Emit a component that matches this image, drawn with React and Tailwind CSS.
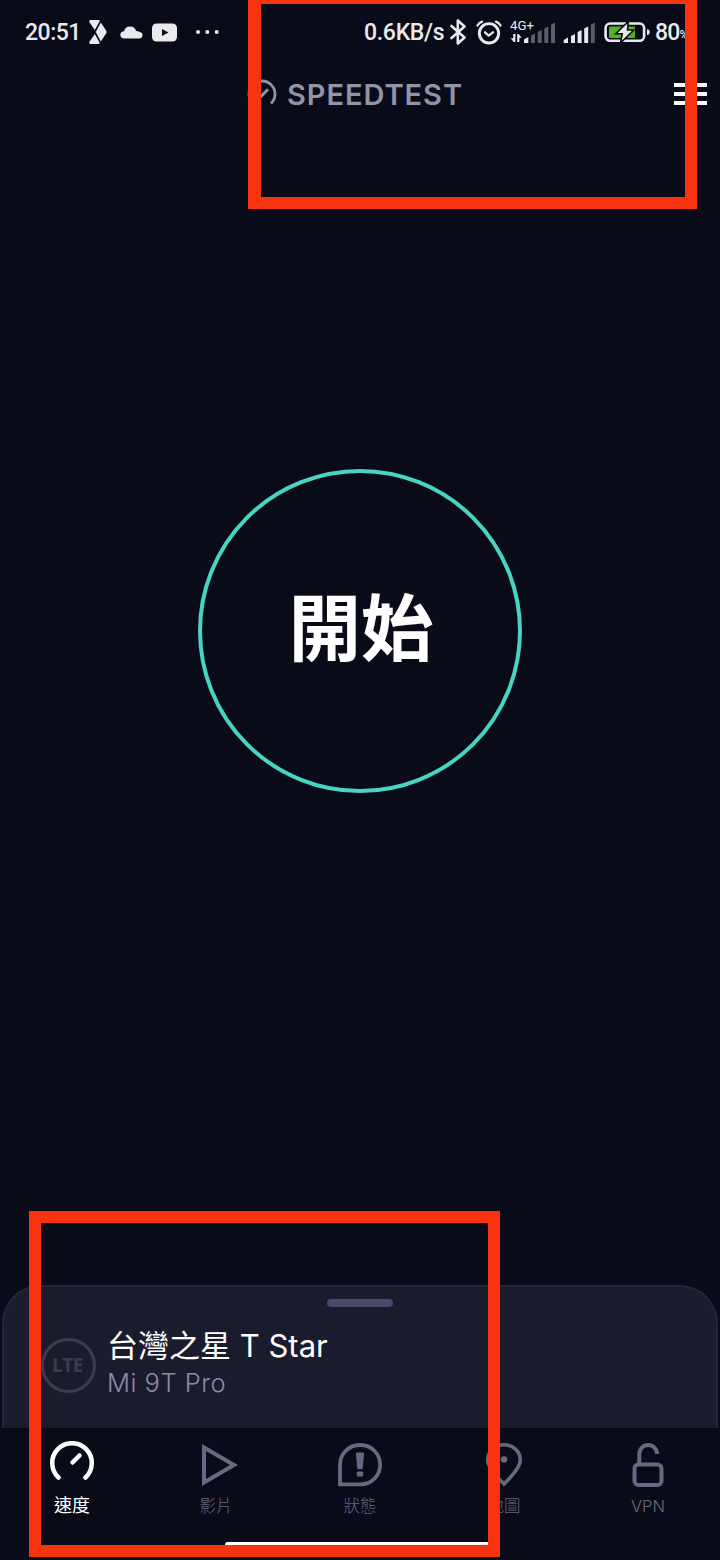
const TEXT = "font-['Inter','Noto_Sans_CJK_TC',sans-serif]";

function StatusBar() {
  return (
    <div className="flex h-16 w-full items-center whitespace-nowrap pl-[25px] font-['Roboto',sans-serif] text-[23px] font-medium text-[#e9e9ee]">
      <span className="mt-[3px] w-[64px] tracking-[-0.5px]">20:51</span>
      <svg className="h-6 w-[18px] shrink-0" viewBox="0 0 18 24" fill="currentColor">
        <path d="M2 0H9.5Q11.3 0.2 10.4 1.8L5.8 10L0.6 2.6Q-0.6 0 2 0Z" />
        <path d="M11.8 2.6L17.3 10.7Q18 12 17.3 13.3L11.8 21.4L6.8 12Z" />
        <path d="M5.8 14L10.4 22.2Q11.3 23.8 9.5 24H2Q-0.6 24 0.6 21.4Z" />
      </svg>
      <svg className="ml-[13px] h-[13px] w-[23px] shrink-0" viewBox="0 0 23 13" fill="currentColor">
        <path d="M4 12.5Q0.2 12 0.3 8.6Q0.6 5.6 4 5.2Q5.2 0.6 10 0.4Q15 0.6 16.2 5Q17.8 4.6 19 5.8Q22.7 6.4 22.6 9.6Q22.3 12.2 19.4 12.5Z" />
      </svg>
      <svg className="ml-[9px] h-[19px] w-[25px] shrink-0" viewBox="0 0 25 19">
        <rect y="0.5" width="25" height="18" rx="4.5" fill="currentColor" />
        <path d="M10 6L16.5 9.5L10 13Z" fill="#090b18" />
      </svg>
      <svg className="ml-[18px] h-1 w-[25px] shrink-0" viewBox="0 0 25 4" fill="currentColor">
        <circle cx="3" cy="2" r="2" />
        <circle cx="12.3" cy="2" r="2" />
        <circle cx="21.7" cy="2" r="2" />
      </svg>
      <span className="ml-[144px] mt-[3px] w-[86px] tracking-[-0.3px]">0.6KB/s</span>
      <svg className="h-[26px] w-4 shrink-0" viewBox="0 0 16 26" fill="none" stroke="currentColor" strokeWidth="2.6" strokeLinejoin="round" strokeLinecap="round">
        <path d="M1.5 7L14.5 18.5L7.8 24.5V1.5L14.5 7.5L1.5 19" />
      </svg>
      <svg className="ml-[10px] h-[25px] w-[26px] shrink-0" viewBox="0 0 26 25" fill="none" stroke="currentColor" strokeLinecap="round" strokeLinejoin="round">
        <circle cx="13" cy="13.3" r="9.7" strokeWidth="2.9" />
        <path d="M1.5 5.5Q3 2.8 6 1.6M24.5 5.5Q23 2.8 20 1.6" strokeWidth="2.3" />
        <path d="M9 12.3L12.7 15.6L17 12.3" strokeWidth="2.3" />
      </svg>
      <svg className="ml-2 h-8 w-[46px] shrink-0 font-normal" viewBox="0 -4 46 32" fill="currentColor">
        <text x="0" y="10" fontSize="13.2">4G+</text>
        <path d="M3.2 14H5.4V22H3.8L0.5 18.3H3.2ZM7.2 22V14H8.6L11.6 17.7H9.4V22Z" />
        <path d="M14 19.5L18.3 17V22.5Q18.3 23 17.8 23H14.5Q14 23 14 22.5Z" />
        <g fill="#5c5c68">
          <path d="M21 15.5L25 13.5V23H21Z" />
          <path d="M27.7 12L31.7 10V23H27.7Z" />
          <path d="M34.3 8.5L38.3 6.5V23H34.3Z" />
          <path d="M41 4.5L45 2.5V23H41Z" />
        </g>
      </svg>
      <svg className="ml-[7px] h-6 w-[33px] shrink-0" viewBox="0 0 33 24" fill="currentColor">
        <path d="M0.7 20L5 17.5V23H0.7Z" />
        <path d="M8 16L12 14V23H8Z" />
        <path d="M14.6 12L18.6 10V23H14.6Z" />
        <path d="M21.2 8.5L25.2 6.5V23H21.2Z" />
        <path d="M27.8 4.5L31.8 2.5V23H27.8Z" fill="#5c5c68" />
      </svg>
      <svg className="ml-2 h-6 w-[47px] shrink-0" viewBox="0 0 47 24">
        <rect x="1.6" y="3.5" width="38.5" height="17.3" rx="4.5" fill="none" stroke="currentColor" strokeWidth="2.6" />
        <rect x="5" y="6.5" width="26" height="11.5" rx="1" fill="#4fb51c" />
        <path d="M43 9.2Q45.7 9.2 45.7 12T43 15Z" fill="currentColor" />
        <path d="M24.3 1.5L11.8 13.7H18.2L16.5 23L29.8 10H23.5Z" fill="currentColor" stroke="#090b18" strokeWidth="1.6" />
      </svg>
      <span className="ml-[4px] mt-[3px] tracking-[-0.8px]">80</span>
      <span className="mt-1.5 text-[12px]">%</span>
    </div>
  );
}

function Header() {
  return (
    <div className="flex h-[60px] w-full items-center justify-between pl-[247px] pr-[13px]">
      <div className="flex items-center">
        <svg className="h-[30px] w-[30px]" viewBox="0 0 30 30" fill="none" stroke="#9393a9" strokeWidth="2.8">
          <path d="M6 24.4A13 13 0 1 1 24 24.4" />
          <path d="M13 18.5L21 10.2" strokeWidth="3" />
        </svg>
        <span className={`ml-[10px] text-[29px] font-semibold leading-none tracking-[0.95px] text-[#9393a9] ${TEXT}`}>
          SPEEDTEST
        </span>
      </div>
      <div className="flex w-[33px] flex-col gap-[5px]">
        <div className="h-1 bg-white" />
        <div className="h-1 bg-white" />
        <div className="h-1 bg-white" />
      </div>
    </div>
  );
}

function ConnectionPanel() {
  return (
    <div className="mx-0.5 flex h-[143px] flex-col rounded-t-[38px] border-2 border-b-0 border-[#242536] bg-[#1b1b2e]">
      <div className="mt-3 h-2 w-[66px] self-center rounded-full bg-[#484a68]" />
      <div className="mt-[19px] flex items-center pl-[37px]">
        <div className="mt-[5px] flex h-[55px] w-[55px] items-center justify-center rounded-full border-[3px] border-[#3b3b4e] pr-0.5 font-['Open_Sans',sans-serif] text-[19px] font-bold tracking-[-0.4px] text-[#3b3b4e]">
          LTE
        </div>
        <div className={`ml-[11px] flex flex-col whitespace-nowrap ${TEXT}`}>
          <span className="text-[31px] leading-[40px] text-white">台灣之星 T Star</span>
          <span className="text-[25.5px] font-light leading-[34px] tracking-[0.5px] text-[#8b8ba3]">Mi 9T Pro</span>
        </div>
      </div>
    </div>
  );
}

const tabs = [
  {
    label: "速度",
    active: true,
    icon: (
      <g strokeWidth="4.5" strokeLinecap="round">
        <path d="M10.5 36.5A19.8 19.8 0 1 1 37.5 36.5" />
        <path d="M24.5 21.5L31.5 14.5" />
      </g>
    ),
  },
  { label: "影片", icon: <path d="M12 6.5L42 24L12 41.5Z" strokeWidth="4" /> },
  {
    label: "狀態",
    icon: (
      <>
        <path d="M4 43.3V23.7A19.7 19.7 0 0 1 23.7 4H24.5A19.6 19.6 0 0 1 24.5 43.3Z" strokeWidth="3.8" />
        <path d="M20.5 12H27.5L26.3 27.5H21.7ZM21.3 31H26.7V35H21.3Z" fill="currentColor" strokeWidth="1" strokeLinejoin="round" />
      </>
    ),
  },
  {
    label: "地圖",
    icon: (
      <>
        <path d="M24 43Q7.7 27 7.7 19A16.3 15.3 0 0 1 40.3 19Q40.3 27 24 43Z" strokeWidth="3.6" />
        <circle cx="24" cy="18.5" r="3.3" fill="currentColor" stroke="none" />
      </>
    ),
  },
  {
    label: "VPN",
    icon: (
      <g strokeWidth="4">
        <rect x="10.5" y="23.5" width="27" height="20.5" rx="4" />
        <path d="M15.3 23V13A8.9 9 0 0 1 33.1 13" />
      </g>
    ),
  },
];

function TabBar() {
  return (
    <div className="flex h-[132px] flex-col items-center">
      <div className="flex h-[113px] w-full pt-[13px]">
        {tabs.map((tab) => (
          <div
            key={tab.label}
            className={`flex w-36 flex-col items-center ${TEXT} ${tab.active ? "text-white" : "text-[#676980]"}`}
          >
            <svg className="h-12 w-12" viewBox="0 0 48 48" fill="none" stroke="currentColor">
              {tab.icon}
            </svg>
            <span className={tab.active ? "mt-[5px] text-[18px] leading-6" : "mt-[5px] text-[16.5px] font-light leading-6"}>
              {tab.label}
            </span>
          </div>
        ))}
      </div>
      <div className="mt-[1px] h-[5px] w-[270px] rounded-full bg-white" />
    </div>
  );
}

export default function App() {
  return (
    <div className="relative flex h-[1560px] w-[720px] flex-col overflow-hidden bg-[#090b18]">
      <StatusBar />
      <Header />
      <main className="flex flex-1 flex-col items-center pt-[345px]">
        <button
          className={`flex h-[324px] w-[324px] items-center justify-center rounded-full border-4 border-[#47d4c4] pb-1 pl-0.5 text-[72.5px] font-bold text-white ${TEXT}`}
        >
          開始
        </button>
      </main>
      <ConnectionPanel />
      <TabBar />

      {/* highlight frames */}
      <div className="absolute left-[248px] top-[-8px] h-[217px] w-[449px] border-[12px] border-l-[13px] border-[#f7340f]" />
      <div className="absolute left-[29px] top-[1211px] h-[346px] w-[471px] border-[12px] border-[#f7340f]" />
    </div>
  );
}
